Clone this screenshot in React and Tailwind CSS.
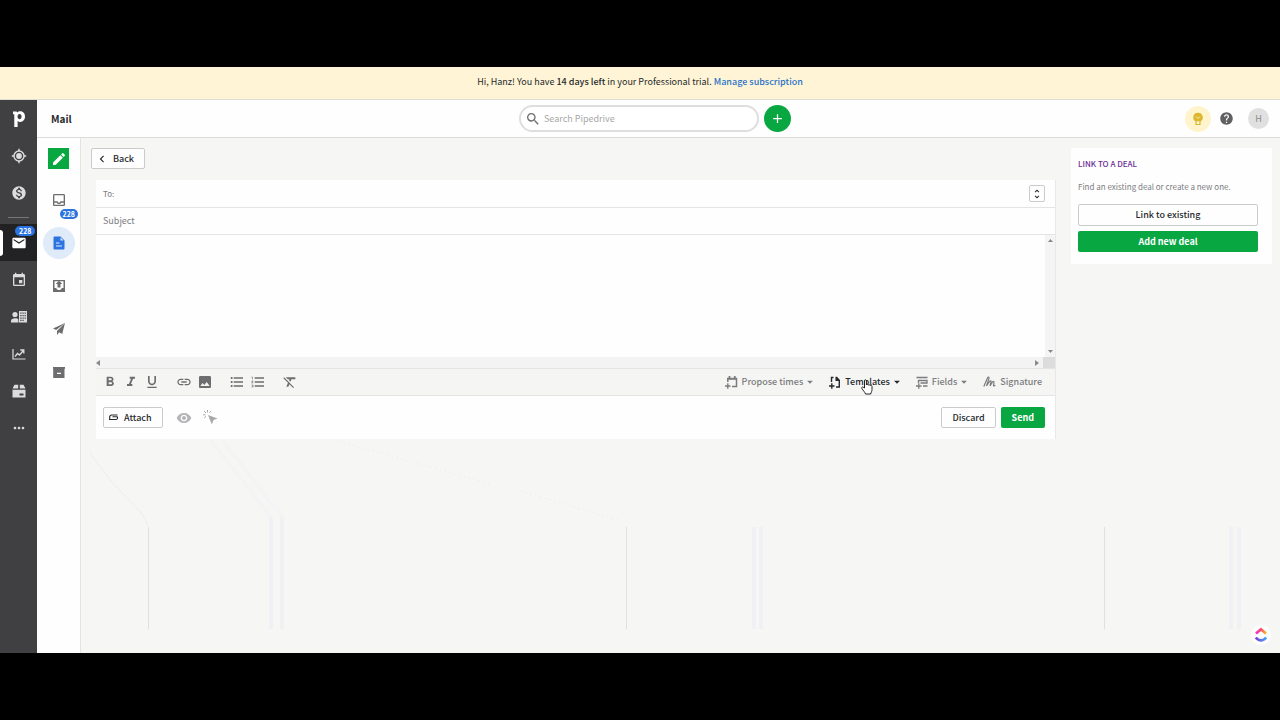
// src/pages/mail/MailCompose.jsx
import {
  MdAdd,
  MdArrowDropDown,
  MdChevronLeft,
  MdCreate,
  MdEmail,
  MdEvent,
  MdFormatBold,
  MdFormatClear,
  MdFormatItalic,
  MdFormatListBulleted,
  MdFormatListNumbered,
  MdFormatUnderlined,
  MdHelp,
  MdImage,
  MdInsertLink,
  MdMonetizationOn,
  MdMoreHoriz,
  MdOutlineInbox,
  MdSearch,
  MdUnfoldMore,
  MdVisibility,
} from "react-icons/md";

function LogoIcon() {
  return (
    <svg width="14" height="18" viewBox="0 0 14 18">
      <path
        fill="#fff"
        fillRule="evenodd"
        d="M1 1.500h3.600l.6 1C6 1.700 7 1.200 8.300 1.200c2.900 0 4.700 2.300 4.700 5.400s-2 5.400-4.700 5.400c-1.200 0-2.100-.4-2.700-1V17H2.300V4.300H1zM7.500 4C6.300 4 5.500 5.100 5.500 6.600s.8 2.600 2 2.600 2.100-1 2.100-2.600S8.700 4 7.500 4z"
      />
    </svg>
  );
}

function TargetIcon() {
  return (
    <svg width="16" height="16" viewBox="0 0 16 16" fill="none" stroke="currentColor">
      <circle cx="8" cy="8" r="5" strokeWidth="1.400" />
      <circle cx="8" cy="8" r="2.900" fill="currentColor" stroke="none" />
      <path d="M8 .8V3M8 13v2.200M.8 8H3M13 8h2.200" strokeWidth="1.400" />
    </svg>
  );
}

function ContactsIcon() {
  return (
    <svg width="16" height="14" viewBox="0 0 16 14" fill="currentColor">
      <circle cx="4" cy="4.500" r="2.600" />
      <path d="M0 12.500V11c0-2 2-2.800 4-2.800s3 .5 3.400 1.300V12.500z" />
      <path
        fillRule="evenodd"
        d="M8 1h8v11.500H8zM9.300 2.500v1.300h1.300V2.500zM11.500 2.500v1.300h1.200V2.500zM13.600 2.500v1.300h1.200V2.500zM9.300 5v1.300h1.300V5zM11.500 5v1.300h1.200V5zM13.600 5v1.300h1.200V5zM9.300 7.500v1.300h1.300V7.500zM11.500 7.500v1.300h1.200V7.500zM13.600 7.500v1.300h1.200V7.500zM9.300 9.800v1.200h1.300V9.800zM11.500 9.800v1.200h1.200V9.800z"
      />
    </svg>
  );
}

function InsightsIcon() {
  return (
    <svg width="14" height="12" viewBox="0 0 14 12" fill="none" stroke="currentColor">
      <path d="M1 1v10h12.500" strokeWidth="1.200" />
      <path d="M3 8.500l2.500-3 2 1.500L11.500 2.500M8.300 2h3.500v3.500" strokeWidth="1.300" />
    </svg>
  );
}

function ProductsIcon() {
  return (
    <svg width="14" height="14" viewBox="0 0 14 14" fill="currentColor">
      <path d="M2.500 .8h3.700V4.500H.5zM7.800 .8h3.700l2 3.700H7.800z" />
      <path fillRule="evenodd" d="M.5 5.800h13V13.500H.5zM7.500 9.500v2h4v-2z" />
    </svg>
  );
}

function DraftIcon() {
  return (
    <svg width="12" height="14" viewBox="0 0 12 14">
      <path fill="#2a73e0" d="M1.500 .5H7.500L11.500 4.500V12.500a1 1 0 0 1-1 1h-9a1 1 0 0 1-1-1v-11a1 1 0 0 1 1-1z" />
      <path stroke="#e0ebfa" strokeWidth="1.200" d="M3 7h3.500M3 10h6" />
      <path fill="#e0ebfa" d="M7.500 1.500v3h3z" />
    </svg>
  );
}

function OutboxIcon() {
  return (
    <svg width="12" height="12" viewBox="0 0 12 12" fill="currentColor">
      <path fillRule="evenodd" d="M0 0h12v12H0zM1.500 1.200V8h1.700c.5 1.400 1.500 2 2.800 2s2.300-.6 2.800-2h1.700V1.200z" />
      <path d="M6 .8L9.300 4H7.500v3.500h-3V4H2.700z" />
    </svg>
  );
}

function SentIcon() {
  return (
    <svg width="12" height="12" viewBox="0 0 12 12" fill="currentColor">
      <path d="M12 0L0 5.500l3.200 1.600zM12 0L4 7.900v4.100L6.200 9.300l3 1.700z" />
    </svg>
  );
}

function ArchiveIcon() {
  return (
    <svg width="12" height="11" viewBox="0 0 12 11" fill="currentColor">
      <path fillRule="evenodd" d="M0 0h12v1.800h-.5V11H.2V1.800H0zM4 5.800V7h4V5.800z" />
    </svg>
  );
}

function BulbIcon() {
  return (
    <svg width="12" height="14" viewBox="0 0 12 14">
      <path fill="#dcb72c" d="M6 .8a4.700 4.700 0 0 0-2.800 8.500h5.600A4.700 4.700 0 0 0 6 .8z" />
      <path fill="none" stroke="#fff2b8" strokeWidth=".9" d="M4 4.500l2 2 2-2" />
      <path fill="none" stroke="#dcb72c" strokeWidth="1.200" d="M4 9v3.500h4V9" />
    </svg>
  );
}

function ClipIcon() {
  return (
    <svg width="9" height="7" viewBox="0 0 9 7" fill="none" stroke="currentColor" strokeWidth="1.100">
      <path d="M8.500 1H3a2.200 2.200 0 0 0-2.200 3L.5 5.500h6a1.700 1.700 0 0 0 1.700-2.700H3.500" />
    </svg>
  );
}

function ClickTrackIcon() {
  return (
    <svg width="15" height="15" viewBox="0 0 15 15">
      <path fill="currentColor" d="M5 5l9.500 3.500-4 1.500-1.700 4.500z" />
      <path stroke="currentColor" strokeWidth="1" d="M4.500 0v2.500M1 1l2 2M0 4.800h2.500M8 1L6.500 2.700M1.200 8l1.800-1.600" />
    </svg>
  );
}

function ProposeIcon() {
  return (
    <svg width="13" height="13" viewBox="0 0 13 13" fill="none" stroke="currentColor">
      <path d="M2.800 6V2.500h8.700v8H7" strokeWidth="1.500" />
      <path d="M2.200 2.800h9.800M4.500 0v2.500M9.800 0v2.500" strokeWidth="1.800" />
      <path d="M0 10h5.500M2.800 7.300v5.500" strokeWidth="1.400" />
    </svg>
  );
}

function TemplateIcon() {
  return (
    <svg width="12" height="13" viewBox="0 0 12 13" fill="none" stroke="currentColor">
      <path d="M2.500 6V1.500H4.500M10.300 5v6H7" strokeWidth="1.400" />
      <path d="M6.500 .8H8L11 4v1H6.500z" fill="currentColor" stroke="none" />
      <path d="M0 10h5.500M2.800 7.300v5.500" strokeWidth="1.400" />
    </svg>
  );
}

function FieldsIcon() {
  return (
    <svg width="12" height="13" viewBox="0 0 12 13" fill="none" stroke="currentColor" strokeWidth="1.300">
      <path d="M.5 1.500h11M2.500 7V4.500h8.500v2.500H4.500M7 10h4.500M0 10h5.500M2.800 7.300v5.500" />
    </svg>
  );
}

function SignatureIcon() {
  return (
    <svg width="13" height="12" viewBox="0 0 13 12" fill="none" stroke="currentColor" strokeWidth="1.200">
      <path d="M.8 10.500L4.500 2c.6-1.500 2-1 1.400.6L3.500 10l3-4.500c.8-1.200 2-.6 1.500.7L7 10l2.500-4c.8-1 1.800-.6 1.500.6l-.5 2.400c-.2 1.200.8 1.200 1.800.3" />
    </svg>
  );
}

function HandCursor() {
  return (
    <svg width="12" height="16" viewBox="0 0 12 16" className="absolute left-8 top-[5px]">
      <path
        fill="#fff"
        stroke="#222"
        d="M3.500 9V1.800c0-1.400 1.900-1.400 1.900 0V6c.2-1 1.800-.9 1.900.2.400-.8 1.700-.6 1.800.4.500-.6 1.900-.3 1.900.9v3c0 1.500-.7 2.500-1.300 4.500H4.500C4 13 2 11.500.9 9.500.3 8.300 1.500 7.500 2.300 8.300z"
      />
    </svg>
  );
}

function ClickUpBadge() {
  return (
    <div className="absolute bottom-2 right-[9px] grid size-5 place-items-center rounded-full bg-white">
      <svg width="14" height="16" viewBox="0 0 14 16" fill="none" strokeWidth="2.800">
        <defs>
          <linearGradient id="cuTop">
            <stop offset="0" stopColor="#f22fd0" />
            <stop offset=".5" stopColor="#fb4a6b" />
            <stop offset="1" stopColor="#ffb818" />
          </linearGradient>
          <linearGradient id="cuBottom">
            <stop offset="0" stopColor="#7b41dc" />
            <stop offset="1" stopColor="#46a6f5" />
          </linearGradient>
        </defs>
        <path stroke="url(#cuTop)" d="M2 6.500l5-4.200 5 4.200" />
        <path stroke="url(#cuBottom)" d="M1.800 10.500c3 3.800 7.400 3.800 10.400 0" />
      </svg>
    </div>
  );
}

const mainNav = [
  { label: "Leads", icon: <TargetIcon /> },
  { label: "Deals", icon: <MdMonetizationOn size={16} /> },
  { label: "Mail", icon: <MdEmail size={16} />, active: true, badge: "228" },
  { label: "Activities", icon: <MdEvent size={16} /> },
  { label: "Contacts", icon: <ContactsIcon /> },
  { label: "Insights", icon: <InsightsIcon /> },
  { label: "Products", icon: <ProductsIcon /> },
  { label: "More", icon: <MdMoreHoriz size={16} /> },
];

const folders = [
  { label: "Inbox", icon: <MdOutlineInbox size={16} />, badge: "228" },
  { label: "Drafts", icon: <DraftIcon />, active: true },
  { label: "Outbox", icon: <OutboxIcon /> },
  { label: "Sent", icon: <SentIcon /> },
  { label: "Archive", icon: <ArchiveIcon /> },
];

const formatGroups = [
  [
    { label: "Bold", Icon: MdFormatBold },
    { label: "Italic", Icon: MdFormatItalic },
    { label: "Underline", Icon: MdFormatUnderlined },
  ],
  [
    { label: "Insert link", Icon: MdInsertLink },
    { label: "Insert image", Icon: MdImage },
  ],
  [
    { label: "Bulleted list", Icon: MdFormatListBulleted },
    { label: "Numbered list", Icon: MdFormatListNumbered },
  ],
  [{ label: "Clear formatting", Icon: MdFormatClear }],
];

function Sidebar() {
  return (
    <nav className="flex w-[37px] shrink-0 flex-col bg-[#404042] text-[#dcdcde]">
      <div className="flex h-[37px] items-center justify-center">
        <LogoIcon />
      </div>
      {mainNav.map((item) => (
        <div key={item.label}>
          {item.active && <div className="mx-2 my-[6px] h-px bg-[#77777a]" />}
          <button
            aria-label={item.label}
            className={
              item.active
                ? "relative flex h-[37px] w-full items-center justify-center bg-[#222224] text-white"
                : "flex h-[37px] w-full items-center justify-center"
            }
          >
            {item.active && <span className="absolute left-0 top-[6px] h-[26px] w-[3px] rounded-r bg-white" />}
            {item.icon}
            {item.badge && (
              <span className="absolute left-[15px] top-[2px] rounded-full bg-[#2a73e0] px-1 text-[7px] leading-[10px] font-bold text-white">
                {item.badge}
              </span>
            )}
          </button>
        </div>
      ))}
    </nav>
  );
}

function FolderNav() {
  return (
    <nav className="flex w-11 shrink-0 flex-col items-center border-r border-[#e4e4e4] bg-[#fefefe] pt-[10px] text-[#6d6d6f]">
      <button aria-label="Compose" className="mb-[15px] grid size-[21px] place-items-center bg-[#08a742] text-white">
        <MdCreate size={16} />
      </button>
      <div className="flex flex-col gap-[11px]">
        {folders.map((item) => (
          <button
            key={item.label}
            aria-label={item.label}
            className={
              item.active
                ? "grid size-8 place-items-center rounded-full bg-[#e0ebfa]"
                : "relative grid size-8 place-items-center"
            }
          >
            {item.icon}
            {item.badge && (
              <span className="absolute left-[17px] top-[25px] rounded-full bg-[#2a73e0] px-[3px] text-[7px] leading-[10px] font-bold text-white">
                {item.badge}
              </span>
            )}
          </button>
        ))}
      </div>
    </nav>
  );
}

function Header() {
  return (
    <header className="grid h-[38px] grid-cols-[1fr_auto_1fr] items-center border-b border-[#dcdcdc] bg-[#fefefe] pl-[14px] pr-[21px]">
      <h1 className="text-[10px] font-bold">Mail</h1>
      <div className="flex items-center gap-[5px]">
        <label className="flex h-[27px] w-[240px] items-center gap-[3px] rounded-full border-2 border-[#dedede] bg-white px-1">
          <MdSearch size={16} className="shrink-0 text-[#6d6d6f]" />
          <input
            type="text"
            aria-label="Search Pipedrive"
            placeholder="Search Pipedrive"
            className="w-full outline-none placeholder:text-[#a8a8a8]"
          />
        </label>
        <button aria-label="Add" className="grid size-[27px] place-items-center rounded-full bg-[#08a742] text-white">
          <MdAdd size={15} />
        </button>
      </div>
      <div className="-mr-[10px] flex items-center justify-end">
        <button aria-label="Tips" className="mr-2 grid size-[26px] place-items-center rounded-full bg-[#fff4cc]">
          <BulbIcon />
        </button>
        <button aria-label="Help" className="mr-[14px] text-[#606062]">
          <MdHelp size={15} />
        </button>
        <button className="grid size-[21px] place-items-center rounded-full bg-[#e0e0e0] text-[#8a8a8a]">H</button>
      </div>
    </header>
  );
}

function MenuButton({ icon, children, dark }) {
  return (
    <button type="button" className={dark ? "relative flex items-center text-[#26292c]" : "flex items-center text-[#7c7c7e]"}>
      {icon}
      <span className="ml-1">{children}</span>
      <MdArrowDropDown size={14} />
      {dark && <HandCursor />}
    </button>
  );
}

function Composer() {
  return (
    <form className="ml-[5px] border-r border-[#e8e8e8] bg-[#fefefe]" onSubmit={(e) => e.preventDefault()}>
      {/* recipients */}
      <div className="flex h-7 items-center border-b border-[#e4e4e4] pl-[7px] pr-[10px] text-[#7c7c7e]">
        <label htmlFor="to" className="text-[8px]">
          To:
        </label>
        <input id="to" type="text" className="min-w-0 flex-1 px-1 outline-none" />
        <button
          type="button"
          aria-label="Show Cc and Bcc"
          className="grid h-[17px] w-4 place-items-center rounded-xs border border-[#cbcbcb] text-[#26292c]"
        >
          <MdUnfoldMore size={12} />
        </button>
      </div>
      <input
        type="text"
        aria-label="Subject"
        placeholder="Subject"
        className="block h-[27px] w-full border-b border-[#e4e4e4] px-[7px] pb-[2px] outline-none placeholder:text-[#7c7c7e]"
      />

      {/* message body with its scroll bars */}
      <div className="flex">
        <textarea aria-label="Message" className="block h-[122px] flex-1 resize-none px-[7px] outline-none" />
        <div className="flex w-[10px] flex-col items-center justify-between bg-[#f4f4f4] py-1 text-[#8a8a8a]">
          <svg width="5" height="3" viewBox="0 0 5 3" fill="currentColor">
            <path d="M0 3L2.500 0 5 3z" />
          </svg>
          <svg width="5" height="3" viewBox="0 0 5 3" fill="currentColor">
            <path d="M0 0h5L2.500 3z" />
          </svg>
        </div>
      </div>
      <div className="flex h-3 items-center justify-between border-b border-[#e4e4e4] bg-[#f3f3f4] text-[#8a8a8a]">
        <svg width="4" height="6" viewBox="0 0 4 6" fill="currentColor">
          <path d="M4 0v6L0 3z" />
        </svg>
        <div className="flex h-full items-center gap-1">
          <svg width="4" height="6" viewBox="0 0 4 6" fill="currentColor">
            <path d="M0 0l4 3-4 3z" />
          </svg>
          <div className="h-full w-3 bg-[#dcdcdc]" />
        </div>
      </div>

      {/* formatting toolbar */}
      <div className="flex h-[27px] items-center justify-between border-b border-[#e4e4e4] bg-[#f5f5f4] pl-[6px] pr-[13px]">
        <div className="flex gap-4 text-[#6d6d6f]">
          {formatGroups.map((group, i) => (
            <div key={i} className="flex gap-[5px]">
              {group.map(({ label, Icon }) => (
                <button key={label} type="button" aria-label={label}>
                  <Icon size={16} />
                </button>
              ))}
            </div>
          ))}
        </div>
        <div className="flex items-center gap-3 font-medium">
          <MenuButton icon={<ProposeIcon />}>Propose times</MenuButton>
          <MenuButton icon={<TemplateIcon />} dark>
            Templates
          </MenuButton>
          <MenuButton icon={<FieldsIcon />}>Fields</MenuButton>
          <button type="button" className="flex items-center gap-1 text-[#7c7c7e]">
            <SignatureIcon />
            Signature
          </button>
        </div>
      </div>

      {/* actions */}
      <div className="flex h-[43px] items-center pl-[7px] pr-[10px] font-medium">
        <button
          type="button"
          className="flex h-[21px] items-center gap-[6px] rounded-xs border border-[#cbcbcb] pl-[5px] pr-[10px]"
        >
          <ClipIcon />
          Attach
        </button>
        <button type="button" aria-label="Track opens" className="ml-[13px] text-[#b4b4b6]">
          <MdVisibility size={16} />
        </button>
        <button type="button" aria-label="Track clicks" className="ml-[11px] text-[#a8a8aa]">
          <ClickTrackIcon />
        </button>
        <button type="button" className="ml-auto h-[21px] rounded-xs border border-[#cbcbcb] px-[10px]">
          Discard
        </button>
        <button className="ml-[5px] h-[21px] rounded-xs bg-[#08a742] px-[11px] font-bold text-white">Send</button>
      </div>
    </form>
  );
}

function DealPanel() {
  return (
    <aside className="self-start bg-[#fefefe] px-[7px] pb-3 pt-[9px]">
      <h2 className="text-[8px] leading-[14px] font-medium text-[#6b2f96]">LINK TO A DEAL</h2>
      <p className="mt-[9px] text-[8px] leading-[14px] text-[#7c7c7e]">Find an existing deal or create a new one.</p>
      <div className="mr-[7px] mt-[10px] flex flex-col gap-[5px]">
        <button className="h-[22px] rounded-xs border border-[#cbcbcb] font-medium">Link to existing</button>
        <button className="h-[21px] rounded-xs bg-[#08a742] font-bold text-white">Add new deal</button>
      </div>
    </aside>
  );
}

// faint traces behind the page
function BackgroundLines() {
  return (
    <svg
      aria-hidden="true"
      className="pointer-events-none absolute bottom-6 left-0 h-[190px] w-full"
      viewBox="0 0 1199 190"
      preserveAspectRatio="none"
      fill="none"
    >
      <path stroke="#e4e4e3" strokeDasharray="1 1" d="M9 14L30 42L62 76L67 87" />
      <path stroke="#e9e9e8" strokeDasharray="1 4" d="M253 1L410 45M440 52L540 82" />
      <path stroke="#e0e0df" d="M67.500 88V190M545.500 88V190M1023.500 88V190" />
      <path stroke="#f2f2f5" strokeWidth="4" strokeDasharray="1 1" d="M130 2L190 78M142 2L201 78" />
      <path stroke="#f1f1f5" strokeWidth="4" d="M190 78V190M201 78V190M673 88V190M680 88V190M1150 88V190M1158 88V190" />
    </svg>
  );
}

export default function App() {
  return (
    <div className="flex min-h-screen flex-col bg-black py-[67px] font-['Noto_Sans_CJK_SC','Noto_Sans',sans-serif] text-[9px] leading-4 text-[#26292c]">
      {/* trial banner */}
      <div className="flex h-[33px] items-center justify-center border-b border-[#dedcd4] bg-[#fff5d6] pb-[2px]">
        <p>
          Hi, Hanz! You have <span className="font-medium">14 days left</span> in your Professional trial.{" "}
          <a href="#subscription" className="font-medium text-[#2a73c9]">
            Manage subscription
          </a>
        </p>
      </div>

      <div className="flex flex-1">
        <Sidebar />
        <div className="flex min-w-0 flex-1 flex-col">
          <Header />
          <div className="flex flex-1">
            <FolderNav />
            <main className="relative grid min-w-0 flex-1 grid-cols-[1fr_201px] gap-[15px] bg-[#f6f6f5] pl-[10px] pr-2 pt-[10px]">
              <BackgroundLines />
              <div className="min-w-0">
                <button className="mb-[11px] flex h-[21px] items-center gap-1 rounded-xs border border-[#cbcbcb] bg-[#fefefe] pl-[3px] pr-[10px] font-medium">
                  <MdChevronLeft size={14} />
                  Back
                </button>
                <Composer />
              </div>
              <DealPanel />
              <ClickUpBadge />
            </main>
          </div>
        </div>
      </div>
    </div>
  );
}
